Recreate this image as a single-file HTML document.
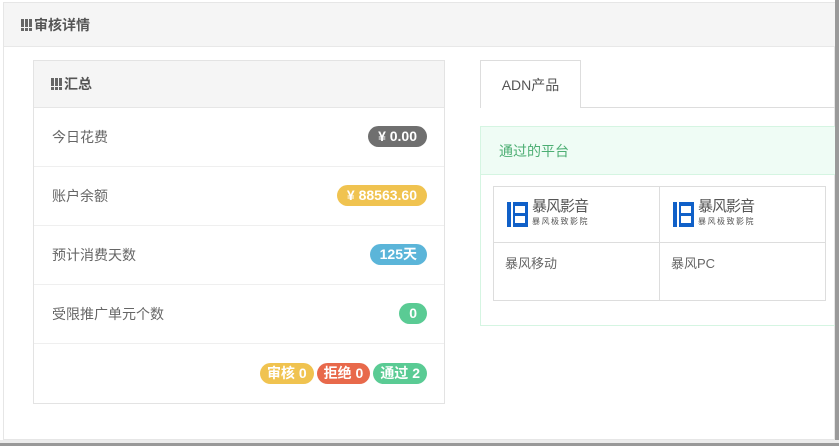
<!DOCTYPE html>
<html><head><meta charset="utf-8"><style>
*{box-sizing:border-box;margin:0;padding:0}
body{width:839px;height:446px;background:#fff;font-family:"Liberation Sans","Noto Sans CJK SC",sans-serif;position:relative;overflow:hidden;color:#666}
.frame{position:absolute;left:3px;top:2px;width:832px;height:438px;border:1px solid #e6e6e6;background:#fff}
.rs{position:absolute;left:835px;top:0;width:4px;height:446px;background:#9a9a9a}
.bs{position:absolute;left:0;top:440px;width:839px;height:6px;background:#ececec;border-bottom:3px solid #999}
.hd{position:absolute;left:4px;top:3px;width:831px;height:44px;background:#f5f5f5;border-bottom:1px solid #e8e8e8;font-size:14px;font-weight:bold;color:#555;line-height:44px;padding-left:17px}
.ic{display:inline-block;width:12px;height:12px;vertical-align:-1px;background:repeating-linear-gradient(90deg,#666 0 3px,transparent 3px 4px);position:relative;margin-right:1px}
.ic:after{content:"";position:absolute;left:0;top:8px;width:12px;height:1px;background:#f5f5f5}
.lp{position:absolute;left:33px;top:60px;width:412px;height:344px;border:1px solid #e3e3e3}
.lph{height:47px;background:#f5f5f5;border-bottom:1px solid #e6e6e6;line-height:46px;padding-left:17px;font-size:14px;font-weight:bold;color:#555}
.row{height:59px;border-bottom:1px solid #efefef;position:relative;font-size:14px;line-height:58px;padding-left:18px;color:#666}
.row:last-child{border-bottom:none}
.b{position:absolute;right:17px;top:18px;height:21px;line-height:21px;border-radius:11px;color:#fff;font-weight:bold;font-size:14px;padding:0 10px}
.b2{position:relative;display:inline-block;height:21px;line-height:21px;border-radius:11px;color:#fff;font-weight:bold;font-size:14px;padding:0 7px;margin-left:3px}
.tab{position:absolute;left:480px;top:60px;width:101px;height:48px;border:1px solid #ddd;border-bottom:none;background:#fff;font-size:14px;line-height:48px;text-align:center;color:#555}
.tl{position:absolute;left:480px;top:107px;width:355px;height:1px;background:#ddd}
.gb{position:absolute;left:480px;top:126px;width:360px;height:200px;border:1px solid #d5f5e2;border-right:none}
.gh{height:48px;background:#effcf5;border-bottom:1px solid #d5f5e2;color:#4cae73;font-size:14px;line-height:48px;padding-left:18px}
table{position:absolute;left:12px;top:59px;border-collapse:collapse}
td{border:1px solid #ddd;width:166px;font-size:13px;color:#666;vertical-align:top}
.lg{height:56px;position:relative}
.lo{position:absolute;left:13px;top:15px;width:21px;height:25px;background:#1060c8}
.lo i{position:absolute;background:#fff}
.t1{position:absolute;left:38px;top:12px;font-size:15px;line-height:15px;color:#555;letter-spacing:-1px}
.t2{position:absolute;left:38px;top:30px;font-size:8px;line-height:9px;color:#555;letter-spacing:1.5px}
</style></head><body>
<div class="frame"></div>
<div class="hd"><span class="ic"></span>审核详情</div>
<div class="lp">
<div class="lph"><span class="ic"></span>汇总</div>
<div class="row">今日花费<span class="b" style="background:#6f6f6f">¥ 0.00</span></div>
<div class="row">账户余额<span class="b" style="background:#f0c350">¥ 88563.60</span></div>
<div class="row">预计消费天数<span class="b" style="background:#5bb5d9">125天</span></div>
<div class="row">受限推广单元个数<span class="b" style="background:#5acb94">0</span></div>
<div class="row"><span style="position:absolute;right:17px;top:0"><span class="b2" style="background:#f0c350">审核 0</span><span class="b2" style="background:#e8694b">拒绝 0</span><span class="b2" style="background:#5acb94">通过 2</span></span></div>
</div>
<div class="tl"></div>
<div class="tab">ADN产品</div>
<div class="gb"><div class="gh">通过的平台</div>
<table><tr><td class="lg"><div class="lo"><i style="left:4px;top:0;width:2px;height:25px"></i><i style="left:8px;top:4px;width:10px;height:7px"></i><i style="left:8px;top:14px;width:10px;height:7px"></i></div><span class="t1">暴风影音</span><span class="t2">暴风极致影院</span></td>
<td class="lg"><div class="lo"><i style="left:4px;top:0;width:2px;height:25px"></i><i style="left:8px;top:4px;width:10px;height:7px"></i><i style="left:8px;top:14px;width:10px;height:7px"></i></div><span class="t1">暴风影音</span><span class="t2">暴风极致影院</span></td></tr>
<tr><td style="height:58px;padding:10px 11px">暴风移动</td><td style="padding:10px 11px">暴风PC</td></tr></table>
</div>
<div class="rs"></div>
<div class="bs"></div>
</body></html>
